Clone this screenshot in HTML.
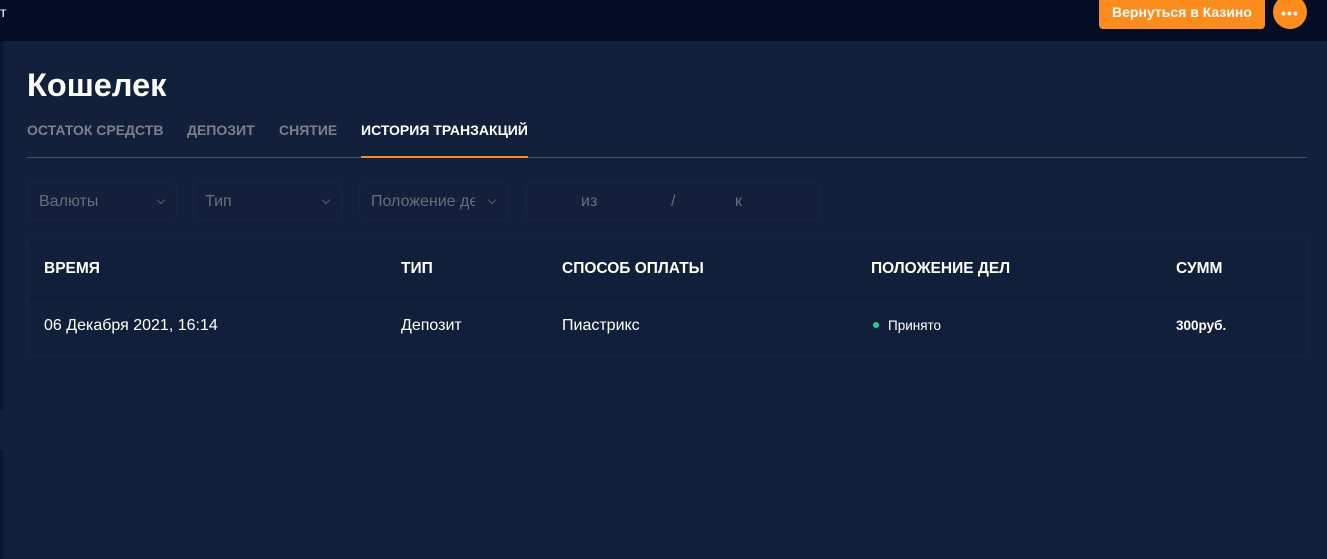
<!DOCTYPE html>
<html><head><meta charset="utf-8"><style>
*{margin:0;padding:0;box-sizing:border-box}
body{width:1327px;height:559px;background:#13203b;font-family:"Liberation Sans",sans-serif;position:relative;overflow:hidden;color:#fff}
.top{position:absolute;left:0;top:0;width:1327px;height:41px;background:#040d24}
.strip{position:absolute;left:0;top:41px;width:3px;height:369px;background:#0b1530}
.strip2{position:absolute;left:0;top:450px;width:3px;height:109px;background:#0b1530}
.t{position:absolute;left:0;top:4px;font-size:14px}
.btn{position:absolute;left:1099px;top:0;width:166px;height:29px;background:#fd8c1c;border-radius:0 0 4px 4px;font-weight:bold;font-size:14px;text-align:center;line-height:24px}
.more{position:absolute;left:1273px;top:-5px;width:34px;height:34px;border-radius:50%;background:#fd8c1c;text-align:center;font-weight:bold;font-size:14px;line-height:36px;letter-spacing:1px}
h1{position:absolute;left:27px;top:67px;font-size:32.5px;font-weight:bold}
.tabs{position:absolute;left:27px;top:122px;font-size:14px;font-weight:bold;color:#7d808a}
.tabs span{position:absolute;white-space:nowrap}
.line{position:absolute;left:27px;top:157px;width:1280px;height:1px;background:#4a5266}
.ul{position:absolute;left:361px;top:156px;width:167px;height:2px;background:#fd8c1c}
.sel{position:absolute;top:182px;height:38px;border:1px solid #182644;background:#131f3b;border-radius:7px;color:#6a6e78;font-size:16px;line-height:38px;padding-left:11px}
.sel i{position:absolute;right:12px;top:14px;width:6px;height:6px;border-right:1px solid #5a5f6a;border-bottom:1px solid #5a5f6a;transform:rotate(45deg)}
.tbl{position:absolute;left:27px;top:238px;width:1281px;height:118px;border:1px solid #182644;border-radius:4px;background:#121f3b}
.row1{position:absolute;left:0;top:59px;width:100%;height:1px;background:#0f1a33}
.c{position:absolute;font-size:16px;white-space:nowrap}
.h{font-weight:bold;font-size:15.5px}
</style></head><body>
<div class="top"></div>
<div class="strip"></div><div class="strip2"></div>
<div class="t">т</div>
<div class="btn">Вернуться в Казино</div>
<div class="more">•••</div>
<h1>Кошелек</h1>
<div class="tabs">
<span style="left:0">ОСТАТОК СРЕДСТВ</span>
<span style="left:160px">ДЕПОЗИТ</span>
<span style="left:252px">СНЯТИЕ</span>
<span style="left:334px;color:#fff">ИСТОРИЯ ТРАНЗАКЦИЙ</span>
</div>
<div class="line"></div><div class="ul"></div>
<div class="sel" style="left:27px;width:150px">Валюты<i></i></div>
<div class="sel" style="left:193px;width:149px">Тип<i></i></div>
<div class="sel" style="left:359px;width:149px;overflow:hidden;white-space:nowrap"><span style="display:inline-block;width:104px;overflow:hidden">Положение дел</span><i></i></div>
<div class="sel" style="left:525px;width:295px;padding:0"><span style="position:absolute;left:55px">из</span><span style="position:absolute;left:145px">/</span><span style="position:absolute;left:209px">к</span></div>
<div class="tbl">
<div class="row1"></div>
<div class="c h" style="left:16px;top:21px">ВРЕМЯ</div>
<div class="c h" style="left:373px;top:21px">ТИП</div>
<div class="c h" style="left:534px;top:21px">СПОСОБ ОПЛАТЫ</div>
<div class="c h" style="left:843px;top:21px">ПОЛОЖЕНИЕ ДЕЛ</div>
<div class="c h" style="left:1148px;top:21px">СУММ</div>
<div class="c" style="left:16px;top:78px">06 Декабря 2021, 16:14</div>
<div class="c" style="left:373px;top:78px">Депозит</div>
<div class="c" style="left:534px;top:78px">Пиастрикс</div>
<div class="c" style="left:845px;top:79px;font-size:13.5px"><span style="display:inline-block;width:6px;height:6px;border-radius:50%;background:#1fd18f;margin-right:9px;vertical-align:2px"></span>Принято</div>
<div class="c" style="left:1148px;top:79px;font-size:13.5px;font-weight:bold">300руб.</div>
</div>
</body></html>
